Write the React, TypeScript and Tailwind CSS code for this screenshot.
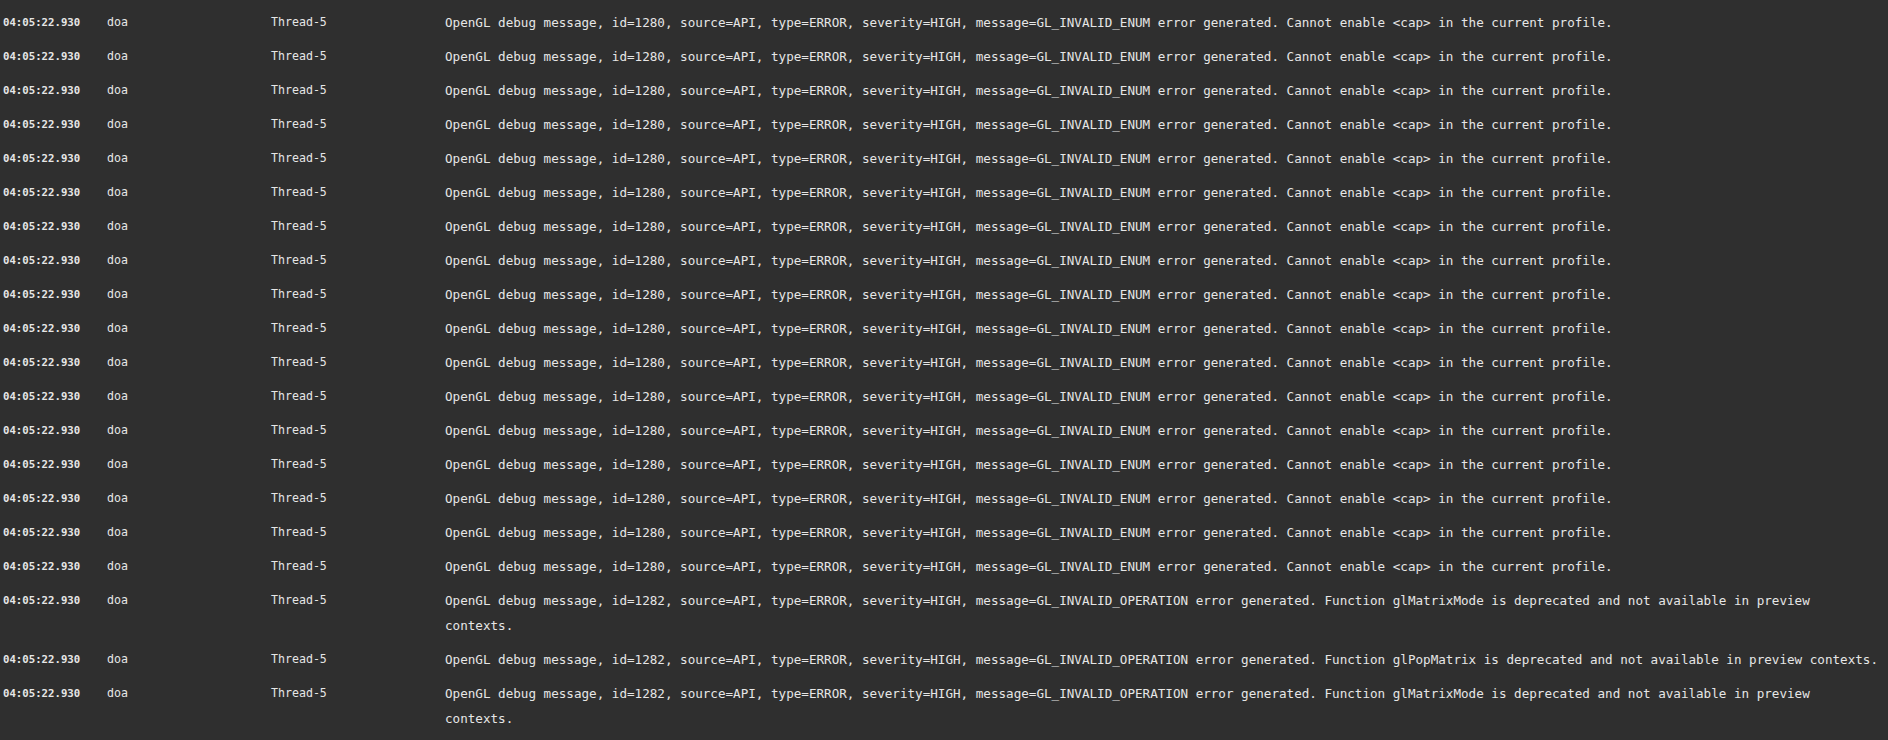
const opEnum =
  "OpenGL debug message, id=1280, source=API, type=ERROR, severity=HIGH, message=GL_INVALID_ENUM error generated. Cannot enable <cap> in the current profile.";
const opMatrixMode =
  "OpenGL debug message, id=1282, source=API, type=ERROR, severity=HIGH, message=GL_INVALID_OPERATION error generated. Function glMatrixMode is deprecated and not available in preview contexts.";
const opPopMatrix =
  "OpenGL debug message, id=1282, source=API, type=ERROR, severity=HIGH, message=GL_INVALID_OPERATION error generated. Function glPopMatrix is deprecated and not available in preview contexts.";

const messages = [
  ...Array(17).fill(opEnum),
  opMatrixMode,
  opPopMatrix,
  opMatrixMode,
];

const LogRow = ({ text }: { text: string }) => {
  return (
    <div className="grid grid-cols-[104px_164px_174px_1438px] items-start pt-[9px] leading-[25px]">
      <span className="text-[10.7px] font-bold">04:05:22.930</span>
      <span className="text-[11.6px]">doa</span>
      <span className="text-[11.6px]">Thread-5</span>
      <span className="text-[12.6px] break-words">{text}</span>
    </div>
  );
};

const App = () => {
  return (
    <div className="min-h-screen bg-[#2f2f2f] pl-[3px] pt-[1px] text-[#e6e6e6] font-['DejaVu_Sans_Mono','Liberation_Mono',monospace]">
      {messages.map((m, i) => (
        <LogRow key={i} text={m} />
      ))}
    </div>
  );
};

export default App;
